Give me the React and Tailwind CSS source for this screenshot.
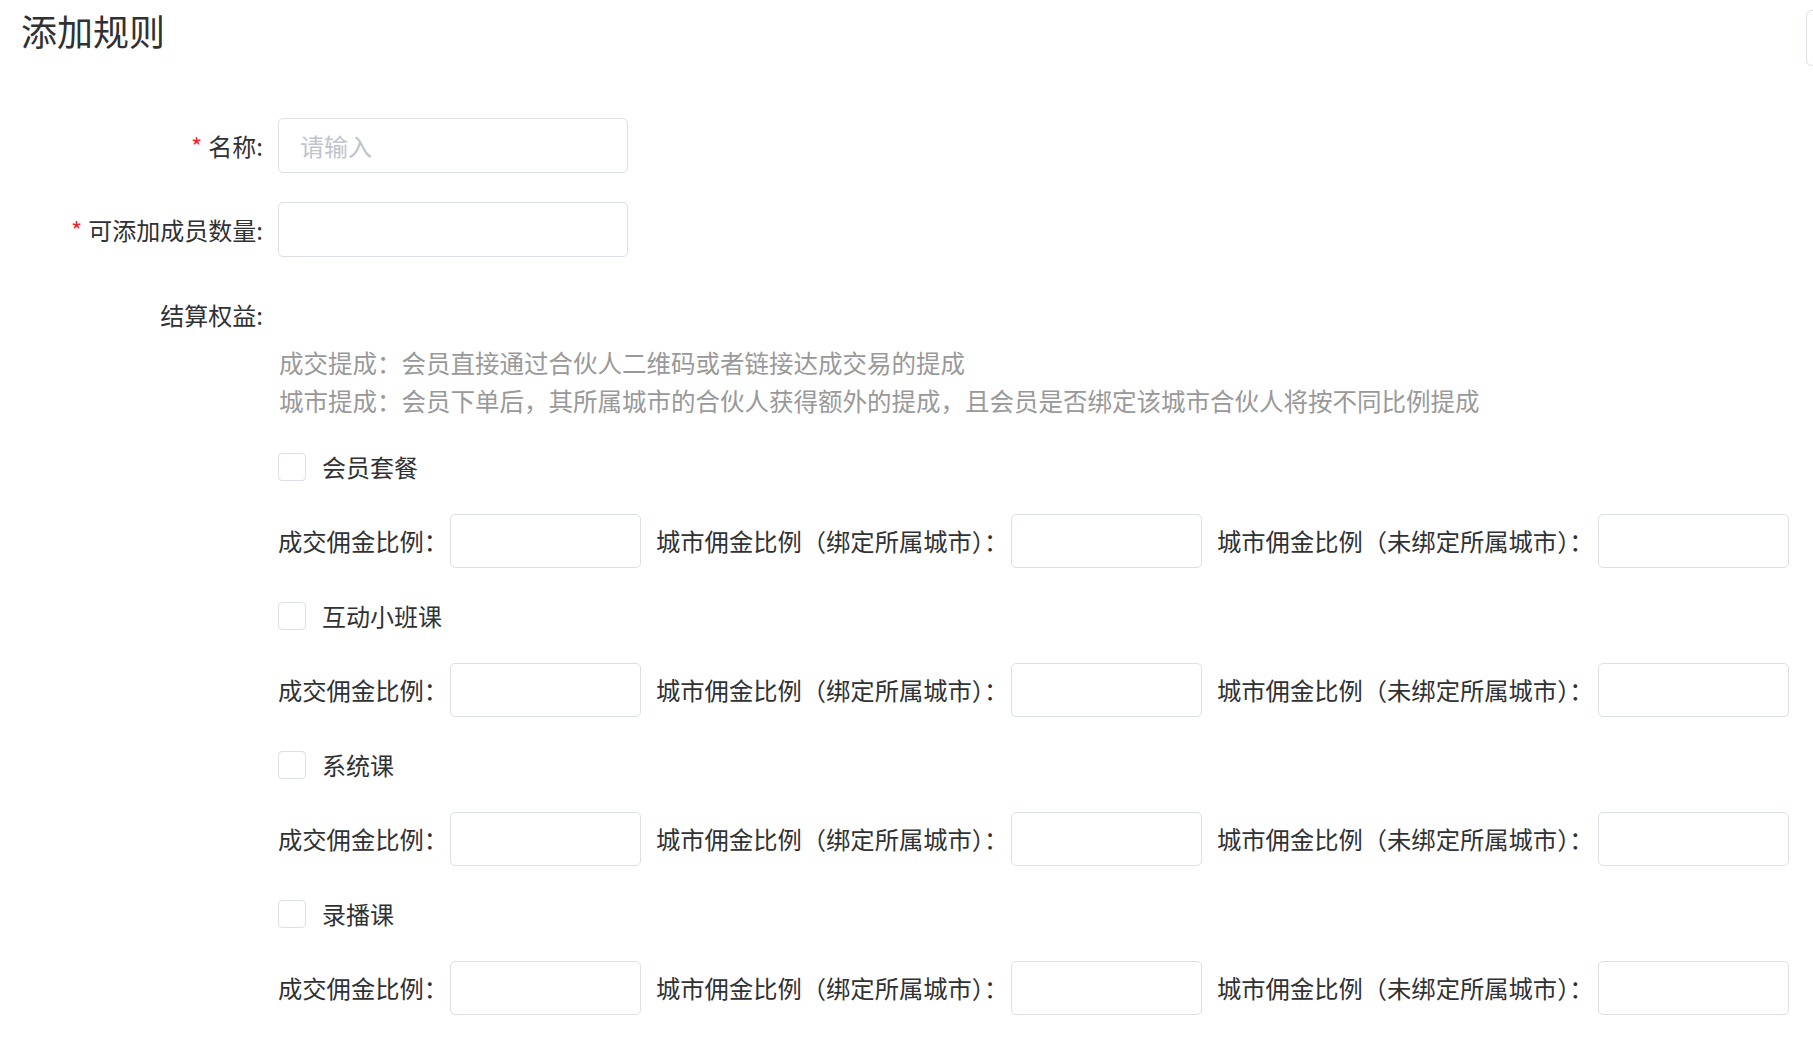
import { useState } from 'react'

const font = { fontFamily: '"Noto Sans CJK SC", "Noto Sans", sans-serif' }

const products = ['会员套餐', '互动小班课', '系统课', '录播课']

function FormRow({ label, required, children, className = '' }) {
    return (
        <div className={`flex items-center h-[55px] ${className}`}>
            <label className="w-[263px] mr-[15px] text-right text-[24px] text-[#303133] whitespace-nowrap">
                {required && <span className="text-[#f5222d] mr-[6px]">*</span>}
                {label}
            </label>
            {children}
        </div>
    )
}

function Box() {
    return (
        <input
            type="text"
            className="h-[54px] w-[191px] border border-[#dcdfe6] rounded-[5px] px-[18px] text-[24px] text-[#303133] outline-none"
        />
    )
}

function ProductGroup({ name }) {
    const [checked, setChecked] = useState(false)

    return (
        <div className="pl-[278px]">
            <div className="flex items-center h-[28px] mt-[34px]">
                <button
                    type="button"
                    onClick={() => setChecked(!checked)}
                    className={`w-[28px] h-[28px] rounded-[4px] border ${checked ? 'bg-[#409eff] border-[#409eff]' : 'bg-white border-[#dcdfe6]'}`}
                />
                <span className="ml-[16px] text-[24px] text-[#303133] leading-none">{name}</span>
            </div>
            <div className="flex items-center mt-[33px] text-[24.3px] text-[#303133] whitespace-nowrap">
                <span className="w-[172px]">成交佣金比例：</span>
                <Box />
                <span className="ml-[15px] w-[355px]">城市佣金比例（绑定所属城市）：</span>
                <Box />
                <span className="ml-[15px] w-[381px]">城市佣金比例（未绑定所属城市）：</span>
                <Box />
            </div>
        </div>
    )
}

export default function App() {
    return (
        <div className="w-full min-h-screen bg-white overflow-hidden" style={font}>
            <div className="flex justify-between items-start h-[76px]">
                <h1 className="ml-[21px] mt-[4px] text-[36px] leading-[52px] text-[#303133] font-normal">添加规则</h1>
                <button
                    type="button"
                    className="mt-[10px] h-[56px] w-[120px] -mr-[113px] border border-[#dcdfe6] rounded-[6px] bg-white"
                />
            </div>

            <form className="pt-[42px]">
                <FormRow label="名称:" required>
                    <input
                        type="text"
                        placeholder="请输入"
                        className="h-[55px] w-[350px] border border-[#dcdfe6] rounded-[5px] px-[21px] text-[24px] text-[#303133] placeholder:text-[#c0c4cc] outline-none"
                    />
                </FormRow>

                <FormRow label="可添加成员数量:" required className="mt-[29px]">
                    <input
                        type="text"
                        className="h-[55px] w-[350px] border border-[#dcdfe6] rounded-[5px] px-[21px] text-[24px] text-[#303133] outline-none"
                    />
                </FormRow>

                <FormRow label="结算权益:" className="mt-[30px]" />

                <div className="pl-[279px] mt-[2px] text-[24.5px] leading-[38px] text-[#999]">
                    <p>成交提成：会员直接通过合伙人二维码或者链接达成交易的提成</p>
                    <p>城市提成：会员下单后，其所属城市的合伙人获得额外的提成，且会员是否绑定该城市合伙人将按不同比例提成</p>
                </div>

                <div className="-mt-[1px]">
                    {products.map((p) => (
                        <ProductGroup key={p} name={p} />
                    ))}
                </div>
            </form>
        </div>
    )
}
